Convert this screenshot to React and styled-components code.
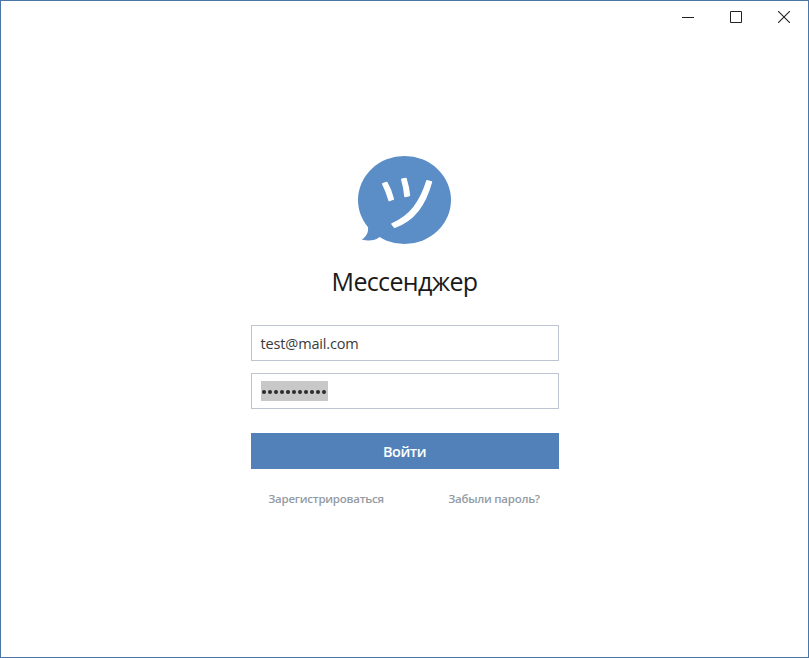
import React from "react";
import styled, { createGlobalStyle } from "styled-components";

const GlobalStyle = createGlobalStyle`
  * { box-sizing: border-box; }
  body { margin: 0; background: #fff; overflow: hidden; }
  button, input { font-family: inherit; }
`;

const Window = styled.div`
  display: flex;
  flex-direction: column;
  height: 658px;
  border: 1px solid #4a76a8;
  background: #fff;
  font-family: "Open Sans", "Noto Sans", sans-serif;
`;

const TitleBar = styled.header`
  display: flex;
  justify-content: flex-end;
  height: 32px;
`;

const WindowButton = styled.button`
  display: flex;
  align-items: center;
  justify-content: center;
  width: 48px;
  height: 32px;
  padding: 0;
  border: 0;
  background: none;
  color: #222;
`;

const Content = styled.main`
  display: flex;
  flex-direction: column;
  align-items: center;
  padding-top: 123px;
`;

const Logo = styled.svg`
  display: block;
  width: 93px;
  height: 88px;
`;

const Title = styled.h1`
  margin: 19px 0 0;
  height: 36px;
  line-height: 36px;
  font-size: 25px;
  font-weight: 400;
  letter-spacing: -0.65px;
  color: #1a1a1a;
  white-space: nowrap;
`;

const Form = styled.form`
  display: flex;
  flex-direction: column;
  gap: 12px;
  width: 308px;
  margin-top: 26px;
`;

const Field = styled.div`
  display: flex;
  align-items: center;
  height: 36px;
  padding: 0 9px;
  border: 1px solid #bcc6d2;
  font-size: 14.5px;
  letter-spacing: -0.15px;
  color: #3a3a3a;
`;

const Selection = styled.span`
  display: flex;
  align-items: center;
  justify-content: space-between;
  width: 67px;
  height: 20px;
  padding: 2px 1px 0;
  background: #c8c8c8;
`;

const Dot = styled.i`
  width: 4px;
  height: 4px;
  border-radius: 50%;
  background: #2b2b2b;
`;

const Submit = styled.button`
  height: 36px;
  margin-top: 12px;
  padding: 1px 0 0;
  border: 0;
  background: #5181b8;
  color: #fff;
  font-size: 14.5px;
  font-weight: 600;
  letter-spacing: -0.5px;
`;

const Links = styled.nav`
  display: grid;
  grid-template-columns: 151px 1fr;
  width: 308px;
  margin-top: 21px;
`;

const TextLink = styled.a`
  font-size: 11.5px;
  line-height: 18px;
  font-weight: 600;
  text-align: center;
  letter-spacing: -0.25px;
  padding-left: ${(p) => p.$inset || "0"};
  color: #939ba5;
  white-space: nowrap;
`;

const password = Array.from({ length: 11 });

export default function App() {
  return (
    <>
      <GlobalStyle />
      <Window>
        <TitleBar>
          <WindowButton aria-label="Свернуть">
            <svg width="12" height="12"><path d="M0 6.5H12" stroke="currentColor" /></svg>
          </WindowButton>
          <WindowButton aria-label="Развернуть">
            <svg width="12" height="12"><path d="M.5.5h11v11H.5z" fill="none" stroke="currentColor" /></svg>
          </WindowButton>
          <WindowButton aria-label="Закрыть">
            <svg width="12" height="12"><path d="M0 0 12 12M12 0 0 12" stroke="currentColor" strokeWidth="1.1" /></svg>
          </WindowButton>
        </TitleBar>
        <Content>
          <Logo viewBox="0 0 93 88">
            <g fill="#5b8dc6">
              <ellipse cx="46.5" cy="44" rx="46.5" ry="44" />
              <path d="M9.5 69C11.2 74.5 9.5 80 3.8 83.6 10 85.5 17 84.8 22 80.8L30 76 14 62Z" />
            </g>
            <g fill="#fff" stroke="#fff" strokeWidth="1.6" strokeLinejoin="round">
              <path d="M24.8 27.8 28.7 26.5Q33 34 35.3 43.1L31.2 44.6Q28.8 35.8 24.8 27.8Z" />
              <path d="M43.8 23.4 47.9 22.5Q50.5 31 51.4 39.4L47 40.4Q46.4 31.8 43.8 23.4Z" />
              <path d="M69 24.8 73.4 26C66.8 49.4 56.2 64.3 36.6 71.3L34 67.9C52.4 59.8 62.3 46.4 69 24.8Z" />
            </g>
          </Logo>
          <Title>Мессенджер</Title>
          <Form onSubmit={(e) => e.preventDefault()}>
            <Field>test@mail.com</Field>
            <Field>
              <Selection aria-label="Пароль">
                {password.map((_, i) => <Dot key={i} />)}
              </Selection>
            </Field>
            <Submit>Войти</Submit>
          </Form>
          <Links>
            <TextLink>Зарегистрироваться</TextLink>
            <TextLink $inset="28px">Забыли пароль?</TextLink>
          </Links>
        </Content>
      </Window>
    </>
  );
}
